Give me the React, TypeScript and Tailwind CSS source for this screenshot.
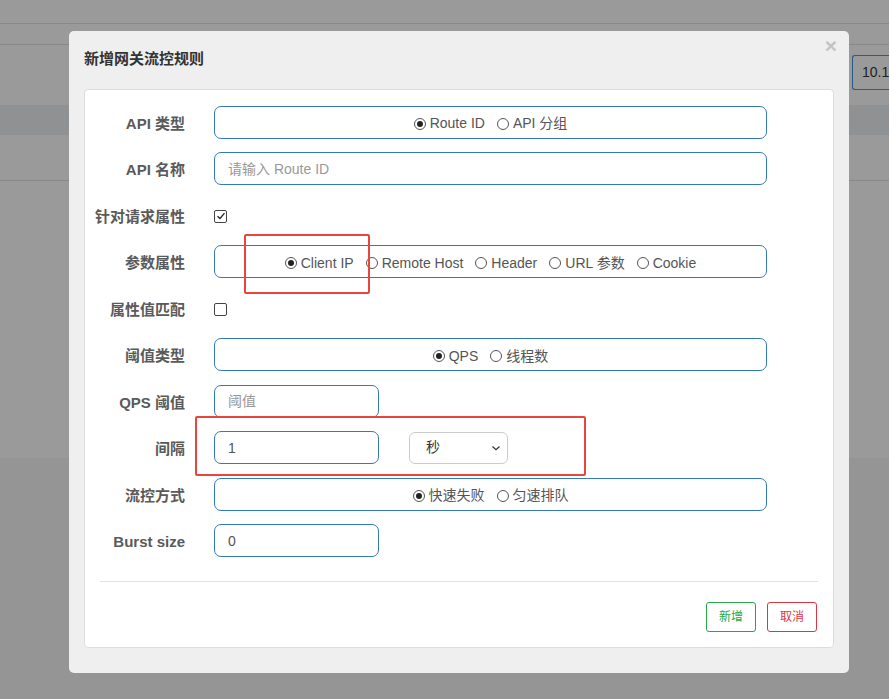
import React from 'react';

const FONT = { fontFamily: '"Liberation Sans", "Noto Sans CJK SC", sans-serif' };

const Radio = ({ checked, label }: { checked?: boolean; label: string }) => (
  <span className="inline-flex items-center">
    <span className="mr-[4px] flex h-[12px] w-[12px] items-center justify-center rounded-full border border-[#555] bg-white">
      {checked && <span className="h-[6px] w-[6px] rounded-full bg-[#222]" />}
    </span>
    <span>{label}</span>
  </span>
);

const Checkbox = ({ checked }: { checked?: boolean }) => (
  <span className="mt-[2px] flex h-[13px] w-[13px] items-center justify-center rounded-[2px] border border-[#444] bg-white">
    {checked && (
      <svg width="10" height="10" viewBox="0 0 10 10" fill="none">
        <path d="M1.5 5.2 L4 7.5 L8.5 2.2" stroke="#222" strokeWidth="1.3" />
      </svg>
    )}
  </span>
);

const Row = ({ label, children }: { label: string; children: React.ReactNode }) => (
  <div className="flex h-[46.5px] items-center">
    <div className="w-[100px] pt-[3px] text-right text-[15px] font-bold text-[#5a5a5a]">{label}</div>
    <div className="ml-[29px] flex items-center">{children}</div>
  </div>
);

const WideBox = ({ children }: { children: React.ReactNode }) => (
  <div className="flex h-[33px] w-[553px] items-center justify-center gap-[12px] rounded-[7px] border border-[#337ab7] bg-white pt-[3px] text-[14px] text-[#555]">
    {children}
  </div>
);

const TextBox = ({ value, placeholder, wide }: { value?: string; placeholder?: string; wide?: boolean }) => (
  <div
    className={`flex h-[33px] items-center rounded-[7px] border border-[#337ab7] bg-white px-[13px] pt-[1px] text-[14px] ${
      wide ? 'w-[553px]' : 'w-[165px]'
    } ${value ? 'text-[#555]' : 'text-[#999]'}`}
  >
    {value ?? placeholder}
  </div>
);

export default function App() {
  return (
    <div className="relative h-[699px] w-[889px] overflow-hidden bg-[#9a9a9a]" style={FONT}>
      {/* page behind the overlay */}
      <div className="h-[24px] border-b border-[#888]" />
      <div className="h-[21px] border-b border-[#888]" />
      <div className="flex h-[60px] justify-end pt-[10px]">
        <div className="flex h-[35px] w-[37px] shrink-0 items-center whitespace-nowrap rounded-l-[3px] border border-r-0 border-[#2a5a8a] pl-[9px] text-[14px] text-[#222]">
          <span className="shrink-0">10.10</span>
        </div>
      </div>
      <div className="h-[30px] bg-[#909193]" />
      <div className="h-[46px] border-b border-[#888]" />
      <div className="h-[277px]" />
      <div className="h-[241px] bg-[#959595]" />

      {/* modal */}
      <div className="absolute left-[69px] top-[31px] flex h-[642px] w-[780px] flex-col rounded-[5px] bg-[#efefef] px-[15px] pb-[25px]">
        <div className="flex h-[58px] items-start justify-between">
          <div className="pt-[17px] text-[15px] font-bold text-[#333]">新增网关流控规则</div>
          <div className="mr-[-3px] pt-[3px] text-[21px] font-bold leading-[24px] text-[#c4c4c4]">×</div>
        </div>
        <div className="flex flex-1 flex-col rounded-[4px] border border-[#ddd] bg-white pt-[9px]">
          <Row label="API 类型">
            <WideBox>
              <Radio checked label="Route ID" />
              <Radio label="API 分组" />
            </WideBox>
          </Row>
          <Row label="API 名称">
            <TextBox wide placeholder="请输入 Route ID" />
          </Row>
          <Row label="针对请求属性">
            <Checkbox checked />
          </Row>
          <Row label="参数属性">
            <WideBox>
              <Radio checked label="Client IP" />
              <Radio label="Remote Host" />
              <Radio label="Header" />
              <Radio label="URL 参数" />
              <Radio label="Cookie" />
            </WideBox>
          </Row>
          <Row label="属性值匹配">
            <Checkbox />
          </Row>
          <Row label="阈值类型">
            <WideBox>
              <Radio checked label="QPS" />
              <Radio label="线程数" />
            </WideBox>
          </Row>
          <Row label="QPS 阈值">
            <TextBox placeholder="阈值" />
          </Row>
          <Row label="间隔">
            <TextBox value="1" />
            <div className="ml-[30px] flex h-[32px] w-[99px] items-center justify-between rounded-[6px] border border-[#ccc] bg-white pl-[16px] pr-[6px] text-[14px] text-[#333]">
              <span>秒</span>
              <svg width="10" height="10" viewBox="0 0 10 10" fill="none">
                <path d="M1.5 3.5 L5 6.8 L8.5 3.5" stroke="#333" strokeWidth="1.2" />
              </svg>
            </div>
          </Row>
          <Row label="流控方式">
            <WideBox>
              <Radio checked label="快速失败" />
              <Radio label="匀速排队" />
            </WideBox>
          </Row>
          <Row label="Burst size">
            <TextBox value="0" />
          </Row>

          <div className="mx-[15px] mt-[17px] border-t border-[#e2e2e2]" />
          <div className="mr-[16px] mt-[20px] flex justify-end gap-[11px]">
            <div className="flex h-[30px] w-[50px] items-center justify-center rounded-[3px] border border-[#28a745] text-[12px] text-[#28a745]">
              新增
            </div>
            <div className="flex h-[30px] w-[50px] items-center justify-center rounded-[3px] border border-[#dc3545] text-[12px] text-[#dc3545]">
              取消
            </div>
          </div>
        </div>
      </div>

      {/* annotation boxes */}
      <div className="absolute left-[244px] top-[234px] h-[60px] w-[126px] rounded-[2px] border-2 border-[#e8453c]" />
      <div className="absolute left-[195px] top-[416px] h-[60px] w-[391px] rounded-[2px] border-2 border-[#e8453c]" />
    </div>
  );
}
